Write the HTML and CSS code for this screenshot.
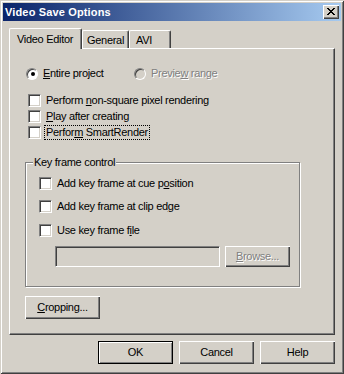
FILE: index.html
```html
<!DOCTYPE html>
<html>
<head>
<meta charset="utf-8">
<link rel="stylesheet" href="styles.css">
</head>
<body>
<div class="window">
  <div class="titlebar">
    <span class="title">Video Save Options</span>
    <div class="close">
      <svg width="8" height="7" viewBox="0 0 8 7" shape-rendering="crispEdges"><path d="M0 0h2v1h-2zM6 0h2v1h-2zM1 1h2v1h-2zM5 1h2v1h-2zM2 2h4v1h-4zM3 3h2v1h-2zM2 4h4v1h-4zM1 5h2v1h-2zM5 5h2v1h-2zM0 6h2v1h-2zM6 6h2v1h-2z" fill="#000"/></svg>
    </div>
  </div>
  <div class="body">
    <div class="tabs">
      <div class="tab active">Video Editor</div>
      <div class="tab tab-general">General</div>
      <div class="tab tab-avi">AVI</div>
    </div>
    <div class="panel">
      <div class="radio-row">
        <div class="radio first"><span class="rb checked"></span><span class="text"><u>E</u>ntire project</span></div>
        <div class="radio disabled"><span class="rb"></span><span class="text">Previe<u>w</u> range</span></div>
      </div>
      <div class="checks">
        <div class="check"><span class="cb"></span><span class="text">Perform <u>n</u>on-square pixel rendering</span></div>
        <div class="check"><span class="cb"></span><span class="text"><u>P</u>lay after creating</span></div>
        <div class="check"><span class="cb"></span><span class="text focus">Perfor<u>m</u> SmartRender</span></div>
      </div>
      <div class="group">
        <span class="group-label">Key frame control</span>
        <div class="check g1"><span class="cb"></span><span class="text">Add key frame at cue p<u>o</u>sition</span></div>
        <div class="check g2"><span class="cb"></span><span class="text">Add key frame at clip ed<u>g</u>e</span></div>
        <div class="check g3"><span class="cb"></span><span class="text">Use key frame f<u>i</u>le</span></div>
        <div class="file-row">
          <div class="field"></div>
          <div class="btn browse"><span><u>B</u>rowse...</span></div>
        </div>
      </div>
      <div class="btn cropping"><span><u>C</u>ropping...</span></div>
    </div>
    <div class="buttons">
      <div class="btn default">OK</div>
      <div class="btn">Cancel</div>
      <div class="btn">Help</div>
    </div>
  </div>
</div>
</body>
</html>
```
FILE: styles.css
```css
html, body {
  margin: 0;
  padding: 0;
  background: #d4d0c8;
}
body {
  font-family: "Liberation Sans", Arial, sans-serif;
  font-size: 11px;
  letter-spacing: -0.3px;
  color: #000;
}
.window {
  width: 344px;
  height: 374px;
  box-sizing: border-box;
  padding: 3px;
  background: #d4d0c8;
  box-shadow: inset 1px 1px 0 #d4d0c8, inset -1px -1px 0 #404040, inset 2px 2px 0 #fff, inset -2px -2px 0 #808080;
}
.titlebar {
  height: 18px;
  display: flex;
  align-items: flex-start;
  justify-content: space-between;
  background: linear-gradient(to right, #0a246a, #a6caf0);
}
.title {
  color: #fff;
  font-weight: bold;
  font-size: 11px;
  letter-spacing: 0.15px;
  line-height: 18px;
  padding-left: 2px;
}
.close {
  width: 16px;
  height: 14px;
  margin: 2px 2px 0 0;
  background: #d4d0c8;
  box-sizing: border-box;
  box-shadow: inset 1px 1px 0 #fff, inset -1px -1px 0 #404040, inset -2px -2px 0 #808080;
  display: flex;
  align-items: center;
  justify-content: center;
}
.close svg { display: block; margin: 0 1px 1px 0; }
.body {
  padding: 7px 6px 0 6px;
}
.tabs {
  display: flex;
  align-items: flex-end;
  height: 20px;
  position: relative;
  z-index: 1;
}
.tab {
  box-sizing: border-box;
  height: 18px;
  line-height: 16px;
  padding: 1px 0 0 0;
  border-top: 1px solid #fff;
  border-left: 1px solid #fff;
  border-right: 1px solid #404040;
  box-shadow: inset -1px 0 0 #808080;
  border-radius: 2px 2px 0 0;
  background: #d4d0c8;
}
.tab.active {
  height: 21px;
  margin-bottom: -1px;
  width: 73px;
  padding-left: 7px;
  line-height: 18px;
}
.tab-general {
  width: 47px;
  padding-left: 4px;
}
.tab-avi {
  width: 42px;
  padding-left: 6px;
}
.panel {
  box-sizing: border-box;
  width: 326px;
  height: 287px;
  border-top: 1px solid #fff;
  border-left: 1px solid #fff;
  border-right: 1px solid #404040;
  border-bottom: 1px solid #404040;
  box-shadow: inset -1px -1px 0 #808080;
  padding: 18px 0 0 15px;
  display: flex;
  flex-direction: column;
  align-items: flex-start;
}
.text { line-height: 13px; white-space: nowrap; }
u { text-decoration: underline; text-underline-offset: 1px; }
.radio-row {
  display: flex;
  height: 13px;
  align-items: center;
}
.radio {
  display: flex;
  align-items: center;
}
.radio.first {
  width: 108px;
  margin-left: 1px;
}
.rb {
  width: 12px;
  height: 12px;
  box-sizing: border-box;
  border-radius: 50%;
  background: #fff;
  border: 1px solid;
  border-color: #808080 #fff #fff #808080;
  box-shadow: inset 1px 1px 0 #404040;
  margin-right: 5px;
  display: flex;
  align-items: center;
  justify-content: center;
}
.rb.checked::after {
  content: "";
  width: 4px;
  height: 4px;
  border-radius: 50%;
  background: #000;
  margin: 1px 0 0 1px;
}
.radio.disabled .rb { background: #d4d0c8; }
.disabled .text, .browse span {
  color: #808080;
  text-shadow: 1px 1px 0 #fff;
}
.checks {
  margin-top: 14px;
  display: flex;
  flex-direction: column;
  gap: 3px;
}
.check {
  display: flex;
  align-items: center;
  height: 13px;
  margin-left: 3px;
}
.cb {
  width: 13px;
  height: 13px;
  box-sizing: border-box;
  background: #fff;
  border: 1px solid;
  border-color: #808080 #fff #fff #808080;
  box-shadow: inset 1px 1px 0 #404040, inset -1px -1px 0 #d4d0c8;
  margin-right: 5px;
  flex: none;
}
.focus {
  outline: 1px dotted #000;
  outline-offset: 0;
  padding: 0 1px;
  margin-left: -1px;
}
.group {
  margin-top: 23px;
  width: 275px;
  height: 125px;
  box-sizing: border-box;
  border: 1px solid #808080;
  box-shadow: 1px 1px 0 #fff, inset 1px 1px 0 #fff;
  padding: 0 0 0 13px;
  display: flex;
  flex-direction: column;
  align-items: flex-start;
}
.group-label {
  margin: -7px 0 0 -6px;
  padding: 0 1px;
  background: #d4d0c8;
  line-height: 13px;
  height: 13px;
}
.group .check { margin-left: 0; }
.g1 { margin-top: 8px; }
.g2 { margin-top: 10px; }
.g3 { margin-top: 11px; }
.file-row {
  margin: 9px 0 0 16px;
  display: flex;
  gap: 5px;
}
.field {
  width: 165px;
  height: 21px;
  box-sizing: border-box;
  background: #d4d0c8;
  border: 1px solid;
  border-color: #808080 #fff #fff #808080;
  box-shadow: inset 1px 1px 0 #404040, inset -1px -1px 0 #d4d0c8;
}
.btn {
  box-sizing: border-box;
  width: 75px;
  height: 23px;
  background: #d4d0c8;
  box-shadow: inset 1px 1px 0 #fff, inset -1px -1px 0 #404040, inset -2px -2px 0 #808080;
  display: flex;
  align-items: center;
  justify-content: center;
  line-height: 13px;
}
.btn.browse {
  width: 65px;
  height: 21px;
}
.btn.cropping {
  margin-top: 9px;
}
.btn.default {
  border: 1px solid #000;
  box-shadow: inset 1px 1px 0 #fff, inset -1px -1px 0 #808080;
}
.buttons {
  margin-top: 6px;
  display: flex;
  justify-content: flex-end;
  gap: 6px;
}
```
